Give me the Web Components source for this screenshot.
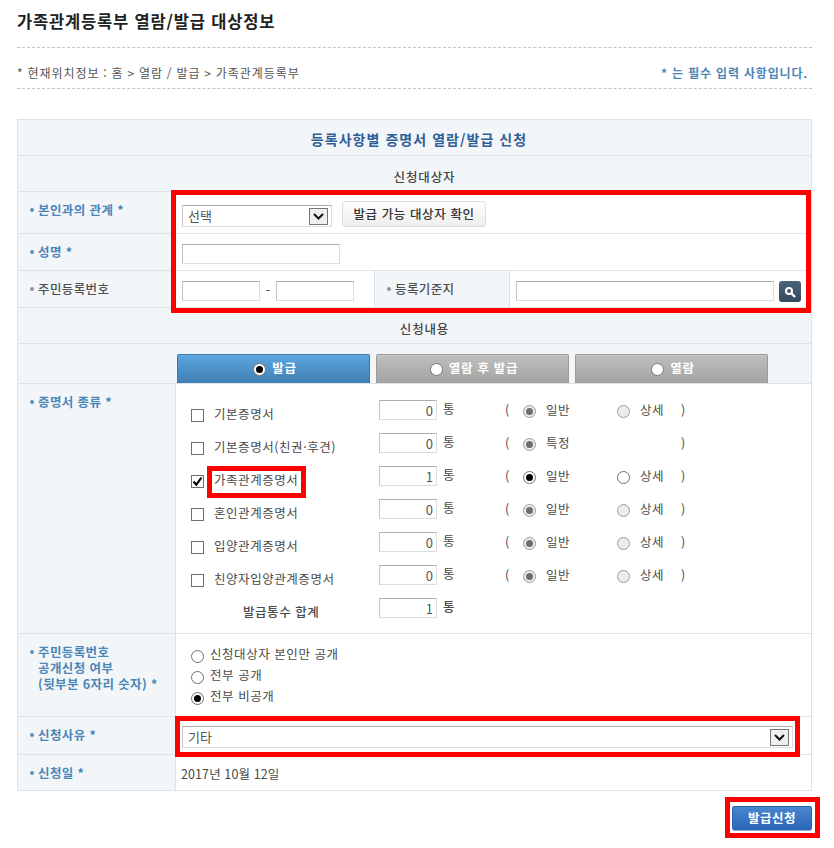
<!DOCTYPE html>
<html lang="ko"><head><meta charset="utf-8"><title>가족관계등록부</title>
<style>
html,body{margin:0;padding:0;background:#fff}
body{font:13px/16px "Noto Sans CJK KR","Liberation Sans",sans-serif;color:#4a4a4a}
</style></head><body>
<script>
const def=(name,css,html)=>{customElements.define(name,class extends HTMLElement{
  connectedCallback(){ if(this.shadowRoot)return; const r=this.attachShadow({mode:'open'});
    const a=k=>this.getAttribute(k)||''; r.innerHTML='<style>'+css+'</style>'+(typeof html==='function'?html(a,this):html); }
});};
const boxInput=':host{display:inline-block}input{display:block;box-sizing:border-box;width:100%;height:100%;margin:0;padding:0 3px;border:1px solid #ddd;border-top-color:#aeaeae;border-left-color:#c4c4c4;background:#fff;font:13px "Noto Sans CJK KR",sans-serif;color:#555;text-align:right;outline:0}';

def('x-page-title',':host{display:block;font-size:16.5px;line-height:22px;font-weight:700;color:#222;letter-spacing:.82px;height:37px;padding-top:10px;margin:0 22px 0 17px;border-bottom:1px dashed #c4c4c4}','<slot></slot>');
def('x-location-bar',':host{display:flex;justify-content:space-between;align-items:center;box-sizing:border-box;margin:0 22px 0 17px;height:41px;padding:10px 4px 0 0;border-bottom:1px dashed #c4c4c4;font-size:12px;color:#555;letter-spacing:.95px;word-spacing:-.4px}.n{color:#4a86b8;font-weight:700;font-size:12px;letter-spacing:.82px;word-spacing:0}','<div><slot></slot></div><div class="n"><slot name="note"></slot></div>');
def('x-form-table',':host{display:block;margin:30px 22px 0 17px;border:1px solid #dfe3e6;border-bottom:0;background:#f3f6f9}','<slot></slot>');
def('x-banner',':host{display:flex;align-items:center;justify-content:center;box-sizing:border-box;border-bottom:1px solid #dfe3e6;font-size:12.5px;font-weight:500;color:#444;letter-spacing:.85px;height:36px;padding:6px 0 0 20px}:host([title-row]){font-size:14px;font-weight:700;color:#2f5f96;letter-spacing:1.05px;padding:2px 0 0 9px}','<slot></slot>');
def('x-row',':host{display:grid;grid-template-columns:158px 1fr;box-sizing:border-box;border-bottom:1px solid #dfe3e6}.th{box-sizing:border-box;border-right:1px solid #dfe3e6;background:#f3f6f9;padding:0 0 0 12px;display:flex;align-items:flex-start}.td{background:#fff;min-width:0;display:flex;align-items:center}',
 `<div class="th" part="th"><slot name="label"></slot></div><div class="td"><slot></slot></div>`);
def('x-label',`:host{display:flex;font-size:12.5px;font-weight:700;line-height:16px;color:#4a86b8;letter-spacing:.4px}:host([plain]){color:#4f4f4f;font-weight:500}
 i{flex:none;width:4px;height:4px;border-radius:50%;background:currentColor;margin:6px 4px 0 0;opacity:.9}:host([plain]) i{background:#8a8a8a}`,'<i></i><span><slot></slot></span>');
def('x-select',`:host{display:block;box-sizing:border-box;height:22px;border:1px solid #ddd;border-top:1px solid #aeaeae;border-left-color:#c8c8c8;background:#fff;position:relative;font-size:13px;line-height:20px;color:#555;padding-left:5px}
 .b{position:absolute;right:3px;top:2px;width:19px;height:17px;box-sizing:border-box;border:1px solid #767676;background:#efefef;display:flex;align-items:center;justify-content:center}`,
 '<slot></slot><span class="b"><svg width="11" height="7" viewBox="0 0 11 7"><path d="M1 1l4.5 4.5L10 1" fill="none" stroke="#111" stroke-width="2"/></svg></span>');
def('x-text',boxInput,(a)=>`<input type="text" value="${a('value')}" aria-label="input">`);
def('x-radio',`:host{display:inline-block;width:13px;height:13px;box-sizing:border-box;border:1px solid #6f6f6f;border-radius:50%;background:#fff;position:relative;flex:none}
 :host([on])::after{content:"";position:absolute;left:2px;top:2px;width:7px;height:7px;border-radius:50%;background:#000}
 :host([off]){border-color:#9b9b9b;background:#ececec}:host([off][on])::after{background:#6e6e6e}`,'');
def('x-check',`:host{display:inline-block;width:13px;height:13px;box-sizing:border-box;border:1px solid #6f6f6f;background:#fff;position:relative}svg{position:absolute;left:-1px;top:-1px}`,
 (a)=>a('on')?'<svg width="13" height="13" viewBox="0 0 13 13"><path d="M2.5 6.5l2.8 3.2L10.5 2.5" fill="none" stroke="#000" stroke-width="2.1"/></svg>':'');
def('x-tabs',':host{display:flex;align-items:flex-end;gap:6px;box-sizing:border-box;height:40px;padding-left:159px;border-bottom:1px solid #dfe3e6}','<slot></slot>');
def('x-tab',`:host{display:flex;align-items:center;justify-content:center;gap:6px;box-sizing:border-box;width:193px;height:29px;border:1px solid #9a9a9a;border-bottom:0;border-radius:2px 2px 0 0;background:linear-gradient(#bfbfbf,#a3a3a3);color:#fff;font-size:12.5px;font-weight:700;letter-spacing:.7px;box-shadow:inset 0 1px 0 #c9c9c9;padding-left:3px}
 :host([active]){border-color:#3a78ac;background:linear-gradient(#5ca6df,#3f7fb3);box-shadow:inset 0 1px 0 #68aee4}
 .d{width:13px;height:13px;border-radius:50%;background:#fff;border:1px solid #777;box-sizing:border-box;position:relative}
 :host([active]) .d::after{content:"";position:absolute;left:2px;top:2px;width:7px;height:7px;border-radius:50%;background:#000}
 span{margin-top:-2px}`,'<i class="d"></i><span><slot></slot></span>');
def('x-cert-list',':host{display:block;flex:1;padding:16px 0 0 15px;align-self:flex-start}','<slot></slot>');
def('x-cert',`:host{display:grid;grid-template-columns:23px 165px 58px 68px 18px 23px 71px 23px 41px 20px;height:33px;align-items:start;font-size:12.5px;color:#4a4a4a;letter-spacing:.55px;line-height:20px}
 .c{margin-top:7px}.l{margin-top:4px}.i{height:20px;display:block}.t{padding-left:6px;margin-top:-1px}.r{margin-top:5px}.pt{margin-top:0}`,
 (a)=>{
  const on=a('mode')==='on';
  const r1=on?'<x-radio on class="r"></x-radio>':'<x-radio on off class="r"></x-radio>';
  const r2=on?'<x-radio class="r"></x-radio>':'<x-radio off class="r"></x-radio>';
  const hasDetail=a('first')!=='특정';
  return `<div class="c"><x-check${a('checked')?' on="1"':''}></x-check></div><div class="l">${a('name')}</div>
  <x-text class="i" value="${a('count')}"></x-text><div class="t">통</div><div class="pt">(</div>${r1}<div class="pt">${a('first')||'일반'}</div>
  ${hasDetail?r2+'<div class="pt">상세</div>':'<span></span><span></span>'}<div class="pt">)</div>`;
 });
def('x-cert-sum',`:host{display:grid;grid-template-columns:23px 165px 58px 62px;height:33px;font-size:12.5px;font-weight:500;letter-spacing:.55px;line-height:20px;color:#4a4a4a}
 .l{grid-column:2;padding-left:29px;margin-top:4px}.i{height:20px;display:block}.t{padding-left:6px;margin-top:-1px}`,
 (a)=>`<div class="l"><slot></slot></div><x-text class="i" value="${a('count')}"></x-text><div class="t">통</div>`);
def('x-choice',`:host{display:flex;align-items:center;gap:6px;height:21px;font-size:12.5px;letter-spacing:.55px;color:#4a4a4a}x-radio{margin-top:3px}`,(a)=>`${a('on')==='1'?'<x-radio on></x-radio>':'<x-radio></x-radio>'}<span style="margin-top:-2px"><slot></slot></span>`);
def('x-btn',`:host{display:inline-flex;align-items:center;justify-content:center;box-sizing:border-box;width:144px;height:26px;border:1px solid #dedede;border-radius:3px;background:linear-gradient(#fdfdfd,#eeeeee);font-size:12.5px;font-weight:500;color:#333;letter-spacing:.6px}`,'<slot></slot>');
def('x-search',`:host{display:flex;align-items:center;justify-content:center;width:22px;height:21px;border-radius:3px;background:linear-gradient(#4b6479,#34495d)}`,'<svg width="12" height="12" viewBox="0 0 12 12"><circle cx="5" cy="5" r="3" fill="none" stroke="#fff" stroke-width="2"/><path d="M7.5 7.5L11 11" stroke="#fff" stroke-width="2.4"/></svg>');
def('x-submit',`:host{display:flex;align-items:center;justify-content:center;box-sizing:border-box;width:80px;height:24px;border:1px solid #2c62ad;border-radius:2px;background:linear-gradient(#4a86cf,#2c66b9);box-shadow:0 1px 0 #8fb0dc;color:#fff;font-size:12.5px;font-weight:700;letter-spacing:.5px}`,'<slot></slot>');
def('x-submit-bar',':host{display:flex;justify-content:flex-end;margin:15px 22px 0 0}','<slot></slot>');
def('x-highlight',':host{display:block;position:absolute;box-sizing:border-box;border:5px solid #f00;pointer-events:none}','');
def('x-app',':host{display:block;position:relative;width:834px;height:848px;overflow:hidden}','<slot></slot>');
</script>

<x-app>
  <x-page-title>가족관계등록부 열람/발급 대상정보</x-page-title>
  <x-location-bar>* 현재위치정보 : 홈 &gt; 열람 / 발급 &gt; 가족관계등록부<span slot="note">* 는 필수 입력 사항입니다.</span></x-location-bar>

  <x-form-table>
    <x-banner title-row>등록사항별 증명서 열람/발급 신청</x-banner>
    <x-banner>신청대상자</x-banner>

    <x-row style="height:42px">
      <x-label slot="label" style="margin-top:10px">본인과의 관계 *</x-label>
      <div style="display:flex;gap:10px;align-items:flex-start;padding:0 0 0 6px;align-self:flex-start">
        <x-select style="width:150px;margin-top:13px">선택</x-select>
        <x-btn style="margin-top:9px">발급 가능 대상자 확인</x-btn>
      </div>
    </x-row>
    <x-row style="height:37px">
      <x-label slot="label" style="margin-top:10px">성명 *</x-label>
      <div style="padding:10px 0 0 6px;display:flex;align-self:flex-start"><x-text style="width:158px;height:20px"></x-text></div>
    </x-row>
    <x-row style="height:37px">
      <x-label slot="label" plain style="margin-top:10px">주민등록번호</x-label>
      <div style="display:flex;flex:1;align-self:stretch">
        <div style="width:198px;display:flex;align-items:flex-start;box-sizing:border-box;padding:10px 0 0 6px">
          <x-text style="width:78px;height:20px"></x-text>
          <span style="width:16px;text-align:center;margin-top:1px">-</span>
          <x-text style="width:78px;height:20px"></x-text>
        </div>
        <div style="width:136px;box-sizing:border-box;border:solid #dfe3e6;border-width:0 1px;background:#f3f6f9;padding:10px 0 0 12px">
          <x-label plain>등록기준지</x-label>
        </div>
        <div style="flex:1;display:flex;align-items:flex-start;gap:5px;padding:10px 0 0 6px">
          <x-text style="width:258px;height:20px"></x-text><x-search></x-search>
        </div>
      </div>
    </x-row>

    <x-banner>신청내용</x-banner>
    <x-tabs>
      <x-tab active>발급</x-tab>
      <x-tab>열람 후 발급</x-tab>
      <x-tab>열람</x-tab>
    </x-tabs>

    <x-row style="height:250px">
      <x-label slot="label" style="margin-top:10px">증명서 종류 *</x-label>
      <x-cert-list>
        <x-cert name="기본증명서" count="0"></x-cert>
        <x-cert name="기본증명서(친권·후견)" count="0" first="특정"></x-cert>
        <x-cert name="가족관계증명서" count="1" checked="1" mode="on"></x-cert>
        <x-cert name="혼인관계증명서" count="0"></x-cert>
        <x-cert name="입양관계증명서" count="0"></x-cert>
        <x-cert name="친양자입양관계증명서" count="0"></x-cert>
        <x-cert-sum count="1">발급통수 합계</x-cert-sum>
      </x-cert-list>
    </x-row>

    <x-row style="height:83px">
      <x-label slot="label" style="margin-top:10px">주민등록번호<br>공개신청 여부<br>(뒷부분 6자리 숫자) *</x-label>
      <div style="padding:2px 0 0 15px">
        <x-choice>신청대상자 본인만 공개</x-choice>
        <x-choice>전부 공개</x-choice>
        <x-choice on="1">전부 비공개</x-choice>
      </div>
    </x-row>
    <x-row style="height:38px">
      <x-label slot="label" style="margin-top:10px">신청사유 *</x-label>
      <div style="flex:1;padding:9px 18px 0 6px;align-self:flex-start"><x-select>기타</x-select></div>
    </x-row>
    <x-row style="height:36px">
      <x-label slot="label" style="margin-top:10px">신청일 *</x-label>
      <div style="padding:2px 0 0 5px;font-size:12.5px;letter-spacing:.1px">2017년 10월 12일</div>
    </x-row>
  </x-form-table>

  <x-submit-bar><x-submit>발급신청</x-submit></x-submit-bar>

  <x-highlight style="left:171px;top:190px;width:640px;height:123px"></x-highlight>
  <x-highlight style="left:207px;top:466px;width:99px;height:32px"></x-highlight>
  <x-highlight style="left:175px;top:716px;width:625px;height:41px"></x-highlight>
  <x-highlight style="left:725px;top:797px;width:95px;height:41px"></x-highlight>
</x-app>
</body></html>
